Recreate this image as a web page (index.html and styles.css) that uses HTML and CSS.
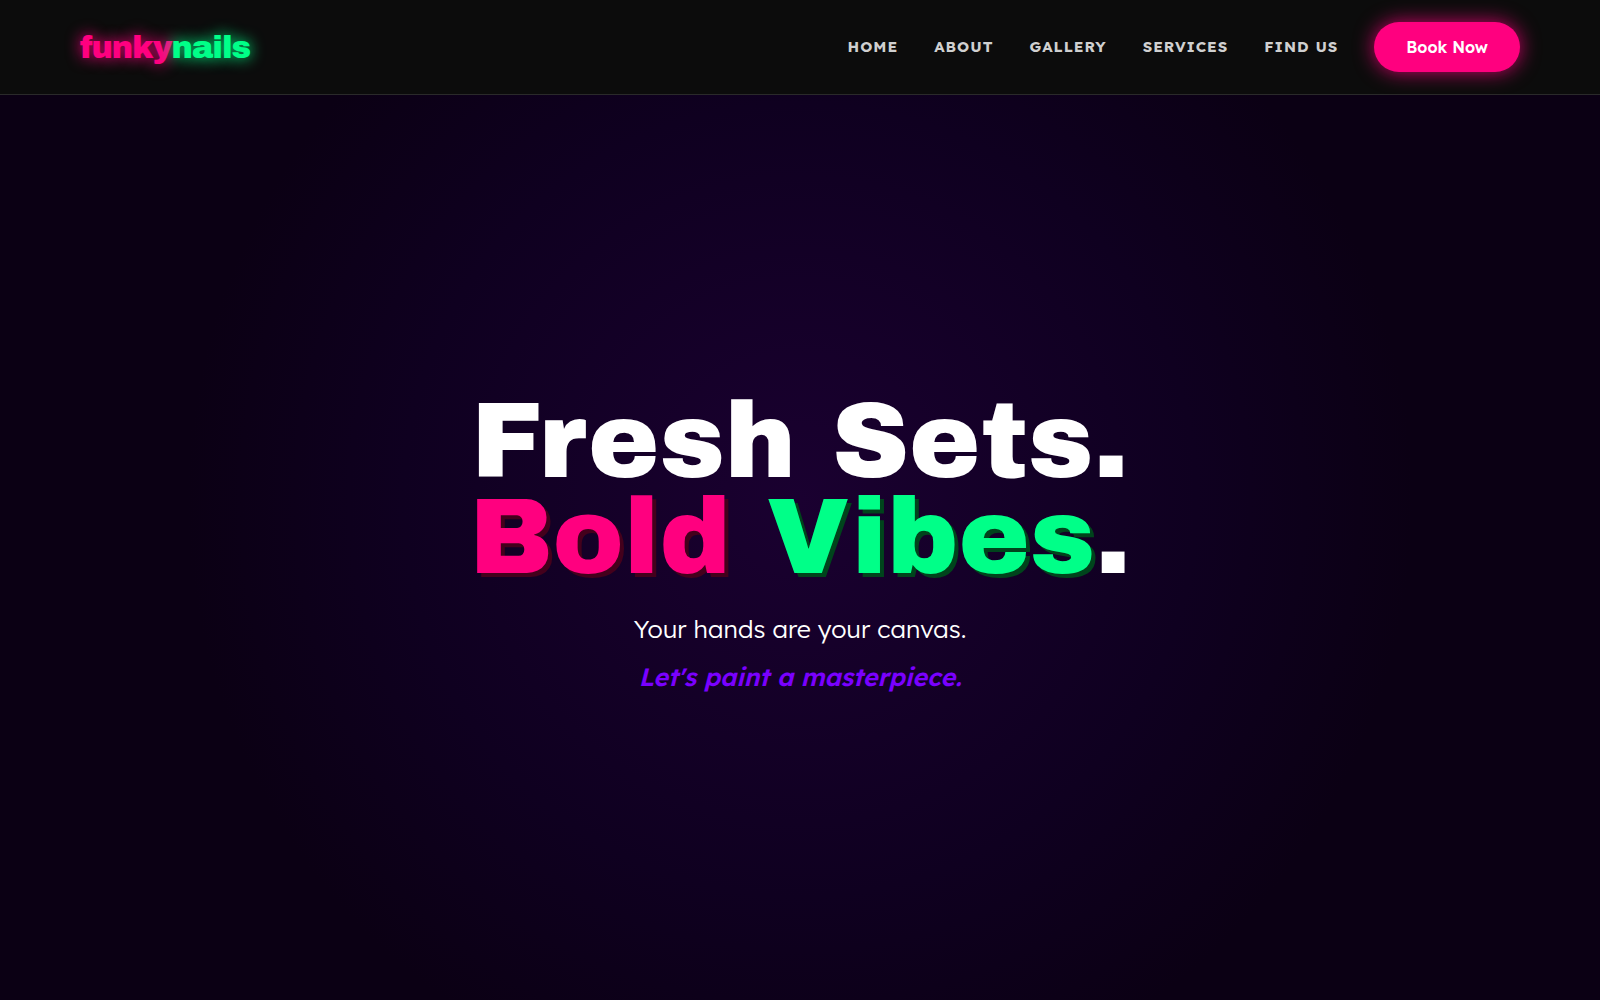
FILE: index.html
```
<!DOCTYPE html>
<html lang="en">

<head>
    <meta charset="UTF-8">
    <meta name="viewport" content="width=device-width, initial-scale=1.0">
    <title>funkynails</title>
    <link rel="stylesheet" href="styles.css">
</head>

<body>
    <header class="navbar">
        <a href="#home" class="logo"><span class="logo-pink">funky</span><span class="logo-green">nails</span></a>
        <nav class="nav-links">
            <a href="#home">Home</a>
            <a href="#about">About</a>
            <a href="#gallery">Gallery</a>
            <a href="#services">Services</a>
            <a href="#find-us">Find Us</a>
            <button type="button" class="book-btn">Book Now</button>
        </nav>
    </header>

    <main>
        <section id="home" class="hero">
            <h1>Fresh Sets.<br><span class="pink">Bold</span> <span class="green">Vibes</span>.</h1>
            <p class="tagline">Your hands are your canvas.</p>
            <p class="tagline accent">Let's paint a masterpiece.</p>
        </section>
    </main>
</body>

</html>
```
FILE: styles.css
```
:root {
    --pink: #ff007f;
    --green: #00ff88;
    --purple: #7a00ff;
    --dark: #0c0c0c;
}

* {
    margin: 0;
    padding: 0;
    box-sizing: border-box;
}

body {
    font-family: 'Lexend', 'Inter', sans-serif;
    background-color: var(--dark);
    color: white;
}

/* Navbar */
.navbar {
    position: fixed;
    top: 0;
    left: 0;
    width: 100%;
    display: flex;
    justify-content: space-between;
    align-items: center;
    padding: 22px 5%;
    background-color: var(--dark);
    border-bottom: 1px solid #2a2a2a;
    z-index: 10;
}

.logo {
    font-family: 'Archivo Black', 'Inter', sans-serif;
    font-size: 32px;
    font-weight: 400;
    letter-spacing: -1px;
    text-decoration: none;
}

.logo-pink {
    color: var(--pink);
    text-shadow: 0 0 15px var(--pink);
}

.logo-green {
    color: var(--green);
    text-shadow: 0 0 15px var(--green);
}

.nav-links {
    display: flex;
    align-items: center;
    gap: 36px;
}

.nav-links a {
    color: #d0d0d0;
    font-size: 15px;
    font-weight: 700;
    line-height: 18px;
    letter-spacing: 1px;
    text-transform: uppercase;
    text-decoration: none;
}

.nav-links a:hover {
    color: var(--green);
}

.book-btn {
    padding: 15px 32px;
    border: none;
    border-radius: 50px;
    background-color: var(--pink);
    color: white;
    font-family: inherit;
    font-size: 16px;
    font-weight: 600;
    line-height: 20px;
    box-shadow: 0 0 20px rgba(255, 0, 127, 0.8);
    cursor: pointer;
}

/* Hero */
.hero {
    min-height: 100vh;
    display: flex;
    flex-direction: column;
    justify-content: center;
    align-items: center;
    padding: 94px 5% 0;
    text-align: center;
    background: radial-gradient(circle at center, #1a0030 0%, #0f0020 42%, #0b0014 65%);
}

h1 {
    margin-bottom: 20px;
    font-family: 'Archivo Black', 'Inter', sans-serif;
    font-size: 107px;
    font-weight: 400;
    line-height: 96px;
}

.pink {
    color: var(--pink);
    text-shadow: 4px 4px 0 #44001c;
}

.green {
    color: var(--green);
    text-shadow: 4px 4px 0 #00441c;
}

.tagline {
    font-size: 25px;
    font-weight: 300;
    line-height: 48px;
}

.accent {
    color: var(--purple);
    font-weight: 600;
    font-style: italic;
}
```
